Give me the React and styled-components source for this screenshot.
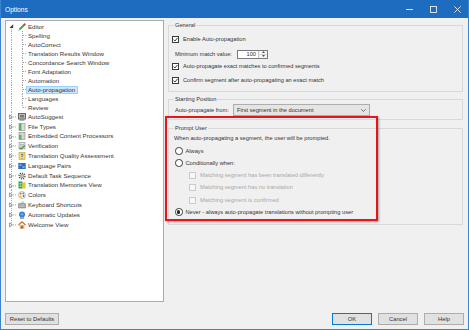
import React from "react";
import styled, { createGlobalStyle } from "styled-components";

const GlobalStyle = createGlobalStyle`
  html, body {
    margin: 0;
    padding: 0;
    background: #f0f0f0;
  }
  body {
    font-family: "Liberation Sans", Arial, sans-serif;
  }
`;

const Window = styled.div`
  position: relative;
  width: 469px;
  height: 330px;
  box-sizing: border-box;
  border: 1px solid #3c84d0;
  border-top: none;
  background: #f0f0f0;
  display: flex;
  flex-direction: column;
  overflow: hidden;
  color: #333;
`;

const TitleBar = styled.div`
  height: 18px;
  margin: 0 -1px;
  padding-left: 5px;
  background: #1d6cbf;
  color: #fff;
  font-size: 6.6px;
  display: flex;
  align-items: center;
`;

const TitleControls = styled.div`
  margin-left: auto;
  display: flex;
  height: 100%;
`;

const TitleButton = styled.div`
  width: 24px;
  height: 100%;
  display: flex;
  align-items: center;
  justify-content: center;
`;

const Main = styled.div`
  display: flex;
  padding: 2px 5px 0 4px;
  gap: 4px;
`;

const Tree = styled.div`
  width: 159px;
  height: 282px;
  box-sizing: border-box;
  border: 1px solid #a9abb0;
  background: #fff;
  padding-top: 1px;
  font-size: 6.15px;
  color: #353535;
`;

const TreeRow = styled.div`
  display: flex;
  align-items: center;
  height: ${(p) => p.$h}px;
`;

const IconSlot = styled.div`
  width: 9px;
  height: 100%;
  display: flex;
  align-items: center;
  svg {
    display: block;
  }
`;

const TreeLabel = styled.span`
  display: inline-block;
  line-height: 6px;
  padding: 0 2px 0 1px;
  white-space: nowrap;
  border: 1px solid ${(p) => (p.$selected ? "#99d1ff" : "transparent")};
  background: ${(p) => (p.$selected ? "#cce8ff" : "transparent")};
`;

const Content = styled.div`
  width: 295px;
  padding-top: 2px;
  display: flex;
  flex-direction: column;
  font-size: 5.7px;
`;

const Group = styled.fieldset`
  margin: ${(p) => p.$mt || 0}px 0 0 0;
  padding: 0 0 ${(p) => p.$pb || 0}px 0;
  border: 1px solid #d9d9d9;
  min-width: 0;
`;

const Legend = styled.legend`
  margin-left: 5px;
  padding: 0 1px;
  line-height: 7px;
  font-size: 5.7px;
  color: #333;
`;

const Row = styled.div`
  display: flex;
  align-items: center;
  height: ${(p) => p.$h || 12}px;
  margin-top: ${(p) => p.$mt || 0}px;
  padding-left: ${(p) => p.$indent || 3}px;
  gap: ${(p) => (p.$gap === undefined ? 4 : p.$gap)}px;
  white-space: nowrap;
  color: ${(p) => (p.$disabled ? "#a8a8a8" : "#333")};
`;

const FieldLabel = styled.span`
  width: ${(p) => p.$w}px;
`;

const Box = styled.span`
  width: 7px;
  height: 7px;
  box-sizing: border-box;
  flex: none;
  border: 1px solid ${(p) => (p.$disabled ? "#cacaca" : "#3a3a3a")};
  background: ${(p) => (p.$disabled ? "#f7f7f7" : "#fff")};
  display: flex;
  align-items: center;
  justify-content: center;
`;

const RadioCircle = styled.span`
  width: 7.5px;
  height: 7.5px;
  box-sizing: border-box;
  flex: none;
  border: 1px solid #3a3a3a;
  border-radius: 50%;
  background: #fff;
  display: flex;
  align-items: center;
  justify-content: center;
  &::after {
    content: "";
    width: 3.3px;
    height: 3.3px;
    border-radius: 50%;
    background: ${(p) => (p.$checked ? "#222" : "transparent")};
  }
`;

const Spin = styled.div`
  width: 31px;
  height: 9px;
  box-sizing: border-box;
  border: 1px solid #7a7a7a;
  background: #fff;
  display: flex;
`;

const SpinValue = styled.span`
  flex: 1;
  text-align: right;
  padding-right: 2px;
  line-height: 7px;
`;

const SpinButtons = styled.div`
  width: 8px;
  border-left: 1px solid #c9c9c9;
  display: flex;
  flex-direction: column;
  background: #f4f4f4;
  div {
    flex: 1;
    display: flex;
    align-items: center;
    justify-content: center;
  }
  div + div {
    border-top: 1px solid #d6d6d6;
  }
`;

const Select = styled.div`
  width: 137px;
  height: 12px;
  box-sizing: border-box;
  border: 1px solid #adadad;
  background: #e5e5e5;
  display: flex;
  align-items: center;
  padding: 0 3px 0 3px;
  span {
    flex: 1;
  }
`;

const Footer = styled.div`
  display: flex;
  gap: 6px;
  margin-top: 11px;
  padding: 0 4px;
`;

const Button = styled.button`
  width: ${(p) => p.$w}px;
  height: 12px;
  margin: 0;
  margin-left: ${(p) => (p.$push ? "auto" : "0")};
  padding: 0;
  box-sizing: border-box;
  border: 1px solid ${(p) => (p.$default ? "#0078d7" : "#adadad")};
  background: #e1e1e1;
  font-family: inherit;
  font-size: 5.8px;
  color: #333;
  line-height: 10px;
`;

const Highlight = styled.div`
  position: absolute;
  left: 164px;
  top: 116px;
  width: 213px;
  height: 105px;
  box-sizing: border-box;
  border: 2px solid #e8141b;
  box-shadow: 1px 1px 2px rgba(0, 0, 0, 0.35);
  pointer-events: none;
`;

const dash = { stroke: "#a8a8a8", strokeWidth: 1, strokeDasharray: "1 1" };

function Guide({ h, first, last, expander }) {
  const m = h / 2;
  return (
    <svg width="11" height={h} viewBox={`0 0 11 ${h}`} style={{ display: "block", flex: "none" }}>
      <line x1="5.5" x2="5.5" y1={first ? m : 0} y2={last ? m : h} {...dash} />
      {expander === "closed" && (
        <>
          <line x1="7" x2="11" y1={m} y2={m} {...dash} />
          <path d={`M3.6 ${m - 2} L6.4 ${m} L3.6 ${m + 2} Z`} fill="#fff" stroke="#7a7a7a" strokeWidth="0.8" />
        </>
      )}
      {expander === "open" && (
        <path d={`M7.2 ${m - 2.2} L7.2 ${m + 1.6} L3.4 ${m + 1.6} Z`} fill="#3a3a3a" />
      )}
    </svg>
  );
}

function Branch({ last }) {
  return (
    <svg width="9" height="9" viewBox="0 0 9 9">
      <line x1="5.5" x2="5.5" y1="0" y2={last ? 4.5 : 9} {...dash} />
      <line x1="6" x2="9" y1="4.5" y2="4.5" {...dash} />
    </svg>
  );
}

const Icon = ({ children }) => (
  <svg width="8" height="8" viewBox="0 0 8 8" style={{ marginLeft: 1 }}>
    {children}
  </svg>
);

const icons = {
  editor: (
    <Icon>
      <path d="M1.6 6.4 L6 2" stroke="#3aa63a" strokeWidth="2" />
      <path d="M5.8 2.2 L7.2 0.8" stroke="#d83b3b" strokeWidth="2" />
      <path d="M0.6 7.4 L1.4 6.6" stroke="#444" strokeWidth="1" />
    </Icon>
  ),
  autosuggest: (
    <Icon>
      <rect x="0.5" y="0.5" width="7" height="5.5" fill="#bdbdbd" stroke="#6a6a6a" />
      <rect x="2" y="2" width="4" height="2.5" fill="#7b7b7b" />
      <rect x="1.5" y="6.5" width="5" height="1" fill="#6a6a6a" />
    </Icon>
  ),
  filetypes: (
    <Icon>
      <rect x="1" y="0.5" width="6" height="7" fill="#dcdcdc" stroke="#8a8a8a" strokeWidth="0.6" />
      <rect x="1" y="0.5" width="2.4" height="7" fill="#58b45a" />
    </Icon>
  ),
  embedded: (
    <Icon>
      <rect x="1" y="0.5" width="6" height="7" fill="#d2d2d2" stroke="#8a8a8a" strokeWidth="0.6" />
      <rect x="1" y="3" width="2.4" height="4.5" fill="#58b45a" />
    </Icon>
  ),
  verification: (
    <Icon>
      <rect x="1" y="0.5" width="6" height="6.5" fill="#e2e2e2" stroke="#8a8a8a" strokeWidth="0.6" />
      <path d="M2 2.5 H6 M2 4 H6" stroke="#9a9a9a" strokeWidth="0.6" />
      <path d="M1.6 5.6 L3 7 L6.8 3.8" stroke="#2e9a3a" strokeWidth="1.2" fill="none" />
    </Icon>
  ),
  tqa: (
    <Icon>
      <rect x="1" y="0.5" width="6" height="7" fill="#f5d878" stroke="#c79f2a" strokeWidth="0.6" />
      <path d="M3 2.6 Q4 1.4 5 2.6 Q5 3.6 4 4 V5" stroke="#2d6cc0" strokeWidth="0.9" fill="none" />
      <circle cx="4" cy="6.2" r="0.5" fill="#2d6cc0" />
    </Icon>
  ),
  langpairs: (
    <Icon>
      <rect x="0.3" y="1" width="7.4" height="6" fill="#2d6fc0" />
      <path d="M1.5 3 H3.5 M4.5 5 H6.5" stroke="#fff" strokeWidth="0.8" />
    </Icon>
  ),
  task: (
    <Icon>
      <circle cx="4" cy="4" r="2.9" fill="none" stroke="#5a5a5a" strokeWidth="1.4" strokeDasharray="1.3 0.9" />
      <circle cx="4" cy="4" r="1.9" fill="#8a8a8a" />
      <circle cx="4" cy="4" r="0.8" fill="#fff" />
    </Icon>
  ),
  tm: (
    <Icon>
      <rect x="0.5" y="0.5" width="4" height="7" fill="#35a04a" />
      <rect x="4.5" y="1.5" width="3" height="6" fill="#f0c419" />
      <path d="M1.5 2.5 H3.5 M1.5 4 H3.5 M1.5 5.5 H3.5" stroke="#fff" strokeWidth="0.6" />
    </Icon>
  ),
  colors: (
    <Icon>
      <circle cx="4" cy="4" r="3.5" fill="#f4f4f4" stroke="#9a9a9a" strokeWidth="0.6" />
      <circle cx="2.6" cy="2.6" r="0.9" fill="#e5484d" />
      <circle cx="5.2" cy="2.4" r="0.9" fill="#3aa655" />
      <circle cx="5.6" cy="5" r="0.9" fill="#2f6fd6" />
      <circle cx="2.6" cy="5.4" r="0.9" fill="#f2b31c" />
    </Icon>
  ),
  keyboard: (
    <Icon>
      <rect x="0.3" y="2.5" width="7.4" height="4.5" rx="0.5" fill="#a7a7a7" stroke="#707070" strokeWidth="0.5" />
      <path d="M1.3 4 H6.7 M1.3 5.5 H6.7" stroke="#e8e8e8" strokeWidth="0.6" strokeDasharray="0.8 0.5" />
      <path d="M4 2.5 V1 H6" stroke="#707070" strokeWidth="0.5" fill="none" />
    </Icon>
  ),
  updates: (
    <Icon>
      <circle cx="4" cy="3.4" r="3" fill="#2f7fd6" />
      <path d="M2.2 3.4 H5.8 M4 1.2 V5.6" stroke="#9fd0ff" strokeWidth="0.5" />
      <rect x="2" y="6.4" width="4" height="1.4" fill="#8a8a8a" />
    </Icon>
  ),
  welcome: (
    <Icon>
      <path d="M0.5 4 L4 0.8 L7.5 4" stroke="#d0662a" strokeWidth="1.1" fill="none" />
      <rect x="1.6" y="4" width="4.8" height="3.6" fill="#f0a860" />
      <rect x="3.3" y="5.2" width="1.4" height="2.4" fill="#8a4a1c" />
    </Icon>
  ),
};

const children = [
  "Spelling",
  "AutoCorrect",
  "Translation Results Window",
  "Concordance Search Window",
  "Font Adaptation",
  "Automation",
  "Auto-propagation",
  "Languages",
  "Review",
];

const roots = [
  ["AutoSuggest", "autosuggest"],
  ["File Types", "filetypes"],
  ["Embedded Content Processors", "embedded"],
  ["Verification", "verification"],
  ["Translation Quality Assessment", "tqa"],
  ["Language Pairs", "langpairs"],
  ["Default Task Sequence", "task"],
  ["Translation Memories View", "tm"],
  ["Colors", "colors"],
  ["Keyboard Shortcuts", "keyboard"],
  ["Automatic Updates", "updates"],
  ["Welcome View", "welcome"],
];

const Check = () => (
  <svg width="5" height="5" viewBox="0 0 5 5">
    <path d="M0.5 2.6 L1.9 4 L4.5 1" stroke="#222" strokeWidth="0.9" fill="none" />
  </svg>
);

function CheckRow({ checked, disabled, indent, label, mt }) {
  return (
    <Row $indent={indent} $mt={mt} $disabled={disabled}>
      <Box $disabled={disabled}>{checked && <Check />}</Box>
      <span>{label}</span>
    </Row>
  );
}

function RadioRow({ checked, label, mt }) {
  return (
    <Row $indent={6} $gap={3} $mt={mt}>
      <RadioCircle $checked={checked} />
      <span>{label}</span>
    </Row>
  );
}

export default function App() {
  return (
    <>
      <GlobalStyle />
      <Window>
        <TitleBar>
          Options
          <TitleControls>
            <TitleButton>
              <svg width="7" height="7" viewBox="0 0 7 7">
                <path d="M0 3.5 H7" stroke="#fff" strokeWidth="0.8" />
              </svg>
            </TitleButton>
            <TitleButton>
              <svg width="7" height="7" viewBox="0 0 7 7">
                <rect x="0.5" y="0.5" width="6" height="6" fill="none" stroke="#fff" strokeWidth="0.8" />
              </svg>
            </TitleButton>
            <TitleButton>
              <svg width="7" height="7" viewBox="0 0 7 7">
                <path d="M0.3 0.3 L6.7 6.7 M6.7 0.3 L0.3 6.7" stroke="#fff" strokeWidth="0.8" />
              </svg>
            </TitleButton>
          </TitleControls>
        </TitleBar>

        <Main>
          <Tree>
            <TreeRow $h={9}>
              <Guide h={9} first expander="open" />
              <IconSlot>{icons.editor}</IconSlot>
              <TreeLabel>Editor</TreeLabel>
            </TreeRow>
            {children.map((name, i) => (
              <TreeRow key={name} $h={9}>
                <Guide h={9} />
                <IconSlot>
                  <Branch last={i === children.length - 1} />
                </IconSlot>
                <TreeLabel $selected={name === "Auto-propagation"}>{name}</TreeLabel>
              </TreeRow>
            ))}
            {roots.map(([name, icon], i) => (
              <TreeRow key={name} $h={9.8}>
                <Guide h={9.8} expander="closed" last={i === roots.length - 1} />
                <IconSlot>{icons[icon]}</IconSlot>
                <TreeLabel>{name}</TreeLabel>
              </TreeRow>
            ))}
          </Tree>

          <Content>
            <Group $pb={5}>
              <Legend>General</Legend>
              <CheckRow checked label="Enable Auto-propagation" mt={4} />
              <Row $indent={6} $gap={0} $mt={4} $h={10}>
                <FieldLabel $w={62}>Minimum match value:</FieldLabel>
                <Spin>
                  <SpinValue>100</SpinValue>
                  <SpinButtons>
                    <div>
                      <svg width="3" height="2" viewBox="0 0 3 2">
                        <path d="M0 2 L1.5 0 L3 2 Z" fill="#555" />
                      </svg>
                    </div>
                    <div>
                      <svg width="3" height="2" viewBox="0 0 3 2">
                        <path d="M0 0 L1.5 2 L3 0 Z" fill="#555" />
                      </svg>
                    </div>
                  </SpinButtons>
                </Spin>
              </Row>
              <CheckRow checked label="Auto-propagate exact matches to confirmed segments" mt={1} />
              <CheckRow checked label="Confirm segment after auto-propagating an exact match" mt={2} />
            </Group>

            <Group $mt={4} $pb={3}>
              <Legend>Starting Position</Legend>
              <Row $indent={6} $gap={0} $mt={1}>
                <FieldLabel $w={58}>Auto-propagate from:</FieldLabel>
                <Select>
                  <span>First segment in the document</span>
                  <svg width="5" height="3" viewBox="0 0 5 3">
                    <path d="M0.3 0.3 L2.5 2.5 L4.7 0.3" stroke="#444" strokeWidth="0.7" fill="none" />
                  </svg>
                </Select>
              </Row>
            </Group>

            <Group $mt={5} $pb={6}>
              <Legend>Prompt User</Legend>
              <Row $indent={5}>When auto-propagating a segment, the user will be prompted.</Row>
              <RadioRow label="Always" mt={1} />
              <RadioRow label="Conditionally when:" />
              <CheckRow disabled indent={20} label="Matching segment has been translated differently" />
              <CheckRow disabled indent={20} label="Matching segment has no translation" />
              <CheckRow disabled indent={20} label="Matching segment is confirmed" mt={1} />
              <RadioRow checked label="Never - always auto-propagate translations without prompting user" />
            </Group>
          </Content>
        </Main>

        <Footer>
          <Button $w={54}>Reset to Defaults</Button>
          <Button $w={40} $push $default>
            OK
          </Button>
          <Button $w={40}>Cancel</Button>
          <Button $w={40}>Help</Button>
        </Footer>

        <Highlight />
      </Window>
    </>
  );
}
